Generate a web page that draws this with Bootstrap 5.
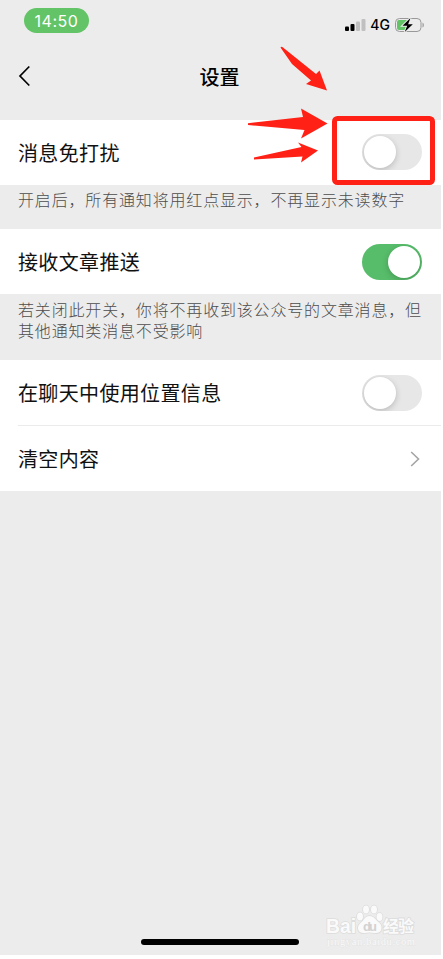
<!DOCTYPE html>
<html lang="zh-CN">
<head>
<meta charset="utf-8">
<meta name="viewport" content="width=device-width, initial-scale=1">
<title>设置</title>
<link href="https://cdn.jsdelivr.net/npm/bootstrap@5.3.0/dist/css/bootstrap.min.css" rel="stylesheet">
<style>
html, body { height: 959px; overflow: hidden; background: #fff; }
body { font-family: Inter, "Noto Sans CJK SC", sans-serif; color: #111; }
.screen { width: 441px; height: 955px; background: #ececec; }
.status { height: 48px; padding: 8px 17px 0 24px; }
.clock { width: 65px; height: 25px; background: #62c466; font-size: 16px; line-height: 26px; letter-spacing: .5px; }
.signal-label { font-size: 14px; line-height: 18px; font-weight: 500; color: #000; }
.status-right { height: 18px; margin-top: 8px; }
.titlebar { height: 72px; }
.back { left: 18px; top: 17px; }
.page-title { font-size: 20px; line-height: 30px; padding-top: 15px; padding-right: 2px; font-weight: 500; color: #000; }
.setting { height: 65px; padding: 0 19px 0 18px; font-size: 20px; letter-spacing: .35px; font-family: "Noto Sans CJK SC", sans-serif; }
.setting-first { padding-bottom: 2px; }
.setting-first > span { padding-top: 2px; }
.divider { height: 1px; margin-left: 18px; background: #ebebeb; }
.note { padding: 4px 18px 0; font-size: 16px; line-height: 21px; letter-spacing: .83px; color: #4c4c4c; font-family: "Noto Sans CJK SC", sans-serif; font-weight: 300; white-space: nowrap; }
.note-one { height: 44px; }
.note-two { height: 66px; padding-top: 5px; }
.switch { width: 60px; height: 36px; padding: 2px; background: #e7e7e7; overflow: hidden; }
.switch.on { background: #57bd6a; }
.knob { width: 32px; height: 32px; background: #fff; box-shadow: 0 2px 6px rgba(0,0,0,.2); }
.overlay { left: 0; top: 0; pointer-events: none; }
.home { left: 141px; top: 939px; width: 158px; height: 6px; background: #000; }
.chev { margin-right: 2px; }
</style>
<script src="https://cdn.jsdelivr.net/npm/bootstrap@5.3.0/dist/js/bootstrap.bundle.min.js"></script>
</head>
<body>
<main class="screen position-relative overflow-hidden">
  <div class="status d-flex justify-content-between align-items-start">
    <div class="clock rounded-pill text-white text-center">14:50</div>
    <div class="status-right d-flex align-items-center">
      <svg width="21" height="14" viewBox="0 0 21 14"><rect x="0" y="8.500" width="4" height="4.500" rx="1"/><rect x="5.500" y="6" width="4" height="7" rx="1"/><rect x="11" y="3.500" width="4" height="9.500" rx="1" fill="#c0c0c0"/><rect x="16.500" y="1" width="4" height="12" rx="1" fill="#c0c0c0"/></svg>
      <span class="signal-label ms-1 me-1">4G</span>
      <svg width="30" height="16" viewBox="0 0 30 16"><rect x="1.500" y="1.500" width="25.500" height="13" rx="4" fill="none" stroke="#999"/><path d="M5 3h9v10H5a2 2 0 0 1-2-2V5a2 2 0 0 1 2-2z" fill="#62c466"/><path d="M28.500 5.500q1.400.5 1.400 2.500t-1.400 2.500z" fill="#999"/><path d="M16.500 1L8.500 8.800h4.700L10.700 15l8.100-7.800h-4.700z" stroke="#ececec" stroke-width="2" paint-order="stroke"/></svg>
    </div>
  </div>
  <header class="titlebar position-relative text-center">
    <svg class="back position-absolute" width="14" height="22" viewBox="0 0 14 22" fill="none" stroke="#000" stroke-width="1.7"><path d="M11.300 1.500L2 11l9.300 9.500"/></svg>
    <div class="page-title">设置</div>
  </header>
  <section>
    <div class="setting setting-first bg-white d-flex align-items-center justify-content-between"><span>消息免打扰</span><div class="switch rounded-pill d-flex align-items-center"><div class="knob rounded-circle"></div></div></div>
    <div class="note note-one">开启后，所有通知将用红点显示，不再显示未读数字</div>
  </section>
  <section>
    <div class="setting bg-white d-flex align-items-center justify-content-between"><span>接收文章推送</span><div class="switch on rounded-pill d-flex align-items-center justify-content-end"><div class="knob rounded-circle"></div></div></div>
    <div class="note note-two">若关闭此开关，你将不再收到该公众号的文章消息，但<br>其他通知类消息不受影响</div>
  </section>
  <section class="bg-white">
    <div class="setting d-flex align-items-center justify-content-between"><span>在聊天中使用位置信息</span><div class="switch rounded-pill d-flex align-items-center"><div class="knob rounded-circle"></div></div></div>
    <div class="divider"></div>
    <div class="setting d-flex align-items-center justify-content-between"><span>清空内容</span><svg class="chev" width="10" height="16" viewBox="0 0 10 16" fill="none" stroke="#a5a5a5" stroke-width="1.600"><path d="M1.200 1l7.300 7-7.300 7"/></svg></div>
  </section>
  <svg class="overlay position-absolute" width="441" height="955" viewBox="0 0 441 955">
    <g fill="#ff2115">
      <path d="M280.500 47.500q1-1.500 2.500 0L316 74l3.500-3.500L327 90.500 306 84l5-3.500L292 64z"/>
      <path d="M248 123.200L303 117l-2-8.500L327.500 123.500 301 138.500l3.500-8.500L248 125z"/>
      <path d="M254 157.500L301.500 147l-3.500-4.500L318 150.500 301 162.500l1.500-6L254 159.500z"/>
    </g>
    <rect x="334.500" y="118.500" width="98" height="64" rx="3" fill="none" stroke="#ff2115" stroke-width="5"/>
    <g fill="#fafafa" stroke="#dcdcdc" stroke-width="1.600" paint-order="stroke" font-family="Liberation Sans, Noto Sans CJK SC, sans-serif">
      <text x="326" y="933" font-size="20" font-weight="700" textLength="30" lengthAdjust="spacingAndGlyphs">Bai</text>
      <ellipse cx="360" cy="916.500" rx="3" ry="4"/><ellipse cx="366" cy="909.500" rx="3" ry="4"/><ellipse cx="374" cy="909.500" rx="3" ry="4"/><ellipse cx="379.500" cy="917" rx="3" ry="4"/>
      <path d="M369.500 916c-5 0-5 4-9 7-5 4-2 11 4 10q5-1 10 0c7 1 9-6 5-10-4-3-5-7-10-7z"/>
      <text x="363" y="931" font-size="13" font-weight="700" fill="#d2d2d2" stroke="none" textLength="14">du</text>
      <text x="383" y="932" font-size="16" font-weight="700" textLength="31">经验</text>
      <text x="327" y="945" font-size="10.500" stroke-width=".5" stroke="#dedede" font-family="Liberation Serif, serif" fill="#fafafa" textLength="88">jingyan.baidu.com</text>
    </g>
  </svg>
  <div class="home position-absolute rounded-pill"></div>
</main>
</body>
</html>
